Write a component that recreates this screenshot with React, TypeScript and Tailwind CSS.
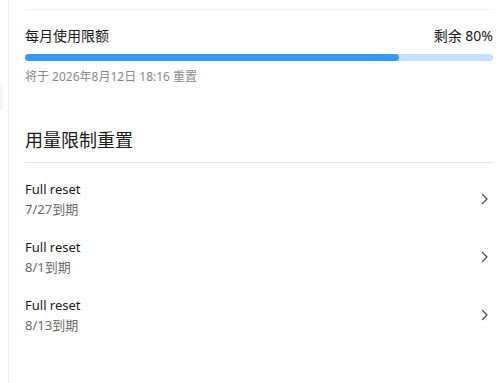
import React from "react";

const resets = [
    { title: "Full reset", date: "7/27到期" },
    { title: "Full reset", date: "8/1到期" },
    { title: "Full reset", date: "8/13到期" },
];

function Chevron() {
    return <svg width="8" height="12" viewBox="0 0 8 12" fill="none">
        <path d="M1.5 1.5 L6 6 L1.5 10.5" stroke="#4a4a4a" strokeWidth="1.2" strokeLinecap="round" strokeLinejoin="round" />
    </svg>;
}

export default function App() {
    return <div className="w-[504px] h-[383px] bg-white overflow-hidden relative"
        style={{ fontFamily: '"Segoe UI", "Noto Sans", "Noto Sans CJK SC", sans-serif' }}>
        <div className="absolute left-0 top-[84px] w-[3px] h-[26px] rounded-r-md bg-[#f4f4f4]" />
        <div className="ml-[8px] h-full border-l border-[#f0f0f0] pl-[16px] pr-[11px]">
            <div className="pt-[9px]">
                <div className="border-t border-[#f0f0f0]" />
            </div>

            <div className="mt-[16px] flex flex-row justify-between items-center">
                <div className="text-[14px] leading-[20px] text-[#1a1a1a]">每月使用限额</div>
                <div className="text-[14px] leading-[20px] text-[#1a1a1a]">剩余 80%</div>
            </div>

            <div className="mt-[8px] w-full h-[7px] rounded-full bg-[#c4e1fd] overflow-hidden">
                <div className="h-full rounded-full bg-[#3399ff]" style={{ width: "80%" }} />
            </div>

            <div className="mt-[8px] text-[12px] leading-[16px] text-[#8a8a8a]">将于 2026年8月12日 18:16 重置</div>

            <div className="mt-[42px] pb-[9px] text-[18px] leading-[26px] text-[#1a1a1a] border-b border-[#e6e6e6]">用量限制重置</div>

            <div className="mt-[7px] flex flex-col">
                {resets.map((r, i) => <div key={i} className="h-[58px] flex flex-row justify-between items-center">
                    <div className="flex flex-col">
                        <div className="text-[13px] leading-[20px] text-[#1a1a1a]">{r.title}</div>
                        <div className="text-[13px] leading-[20px] text-[#6b6b6b]">{r.date}</div>
                    </div>
                    <div className="mr-[4px]"><Chevron /></div>
                </div>)}
            </div>
        </div>
    </div>;
}
